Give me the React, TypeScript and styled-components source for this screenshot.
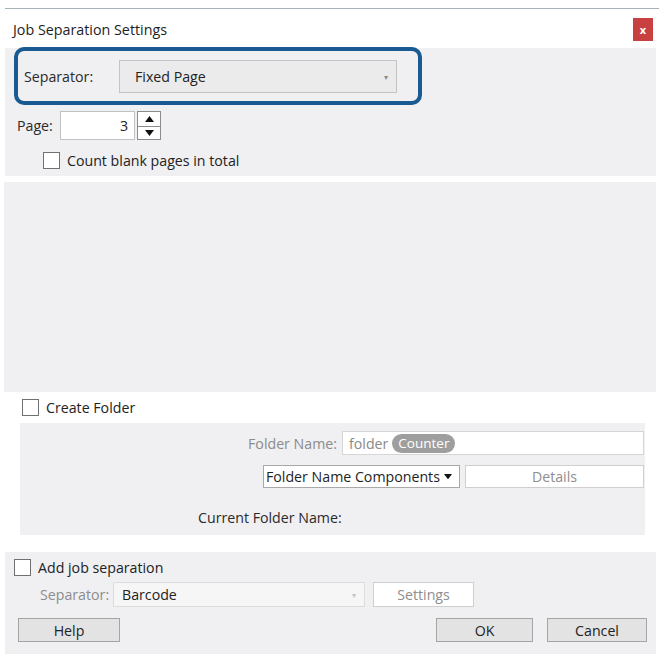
import React from "react";
import styled, { createGlobalStyle } from "styled-components";

const GlobalStyle = createGlobalStyle`
  html, body {
    margin: 0;
    padding: 0;
    background: #ffffff;
  }
  body {
    font-family: "Open Sans", "Noto Sans", "Liberation Sans", sans-serif;
    font-size: 14.2px;
    color: #262626;
  }
`;

const panelBg = "#f0eff2";

const Window = styled.div`
  width: 659px;
  height: 654px;
  display: flex;
  flex-direction: column;
  overflow: hidden;
  background: #ffffff;
`;

const TopRule = styled.div`
  height: 1px;
  margin: 8px 0 0 5px;
  background: #a6b4bb;
`;

const TitleBar = styled.div`
  height: 39px;
  display: flex;
  align-items: center;
  justify-content: space-between;
  padding: 0 6px 0 13px;
`;

const Title = styled.span`
  font-size: 14.3px;
  color: #1e1e1e;
  margin-top: 2px;
`;

const CloseButton = styled.button`
  width: 20px;
  height: 23px;
  margin-top: 2px;
  border: none;
  padding: 0;
  background: #c8403f;
  color: #ffffff;
  font-family: "Open Sans", sans-serif;
  font-size: 11px;
  font-weight: 700;
  line-height: 20px;
`;

const Panel = styled.div<{ $top?: number; $left: number; $right: number; $height: number }>`
  background: ${panelBg};
  margin: ${(p) => p.$top ?? 0}px ${(p) => p.$right}px 0 ${(p) => p.$left}px;
  height: ${(p) => p.$height}px;
  display: flex;
  flex-direction: column;
  box-sizing: border-box;
`;

const Highlight = styled.div`
  margin: -1px 0 0 9px;
  width: 408px;
  height: 58px;
  box-sizing: border-box;
  border: 4.5px solid #1a5a92;
  border-radius: 10px;
  display: flex;
  align-items: center;
  padding-left: 6px;
  background: ${panelBg};
`;

const FieldLabel = styled.span<{ $width: number; $muted?: boolean }>`
  width: ${(p) => p.$width}px;
  flex: none;
  color: ${(p) => (p.$muted ? "#8d8d8d" : "#2a2a2a")};
`;

const Combo = styled.div<{ $width: number; $height: number; $disabled?: boolean }>`
  width: ${(p) => p.$width}px;
  height: ${(p) => p.$height}px;
  box-sizing: border-box;
  border: 1px solid ${(p) => (p.$disabled ? "#dcdcdc" : "#c4c4c4")};
  background: ${(p) => (p.$disabled ? "#f6f6f7" : "#ebebeb")};
  display: flex;
  align-items: center;
  justify-content: space-between;
  padding: 0 8px 0 ${(p) => (p.$disabled ? 8 : 15)}px;
  color: #222;
`;

const ComboArrow = styled.span<{ $light?: boolean }>`
  font-size: 8px;
  color: ${(p) => (p.$light ? "#c4c4c4" : "#8a8a8a")};
`;

const PageRow = styled.div`
  display: flex;
  align-items: center;
  margin-top: 6px;
  padding-left: 12px;
`;

const SpinInput = styled.div`
  width: 75px;
  height: 29px;
  box-sizing: border-box;
  border: 1px solid #c2c2c2;
  background: #ffffff;
  display: flex;
  align-items: center;
  justify-content: flex-end;
  padding-right: 6px;
  color: #222;
`;

const SpinButtons = styled.div`
  width: 24px;
  height: 29px;
  margin-left: 2px;
  box-sizing: border-box;
  border: 1px solid #8c8c8c;
  background: #ffffff;
  display: grid;
  grid-template-rows: 1fr 1fr;
  & > span + span {
    border-top: 1px solid #8c8c8c;
  }
`;

const SpinHalf = styled.span`
  display: flex;
  align-items: center;
  justify-content: center;
`;

const CheckRow = styled.div<{ $indent: number; $top?: number; $height?: number }>`
  display: flex;
  align-items: center;
  padding-left: ${(p) => p.$indent}px;
  margin-top: ${(p) => p.$top ?? 0}px;
  height: ${(p) => (p.$height ? `${p.$height}px` : "auto")};
  color: #222;
`;

const Box = styled.span`
  width: 17px;
  height: 17px;
  box-sizing: border-box;
  border: 1px solid #717171;
  background: #ffffff;
  margin-right: 7px;
  flex: none;
`;

const Row = styled.div<{ $top: number; $indent?: number }>`
  display: flex;
  align-items: center;
  margin-top: ${(p) => p.$top}px;
  padding-left: ${(p) => p.$indent ?? 0}px;
`;

const EndRow = styled(Row)`
  justify-content: flex-end;
  padding-right: 1px;
`;

const MutedLabel = styled.span`
  color: #8b8b8b;
  margin-right: 5px;
`;

const TextField = styled.div`
  width: 302px;
  height: 24px;
  box-sizing: border-box;
  border: 1px solid #d6d6d6;
  background: #ffffff;
  display: flex;
  align-items: center;
  padding-left: 6px;
  color: #8a8a8a;
`;

const Token = styled.span`
  margin-left: 4px;
  height: 19px;
  padding: 0 6px;
  border-radius: 10px;
  background: #9e9e9e;
  color: #ffffff;
  display: flex;
  align-items: center;
  font-size: 13.5px;
`;

const MenuButton = styled.div`
  width: 197px;
  height: 23px;
  box-sizing: border-box;
  border: 1px solid #a9a9a9;
  background: #ffffff;
  display: flex;
  align-items: center;
  padding-left: 2px;
  gap: 4px;
  color: #1e1e1e;
  white-space: nowrap;
`;

const Button = styled.div<{ $width: number; $height: number; $disabled?: boolean }>`
  width: ${(p) => p.$width}px;
  height: ${(p) => p.$height}px;
  box-sizing: border-box;
  border: 1px solid ${(p) => (p.$disabled ? "#cfcfcf" : "#a5a5a5")};
  background: ${(p) => (p.$disabled ? "#ffffff" : "#e3e3e4")};
  color: ${(p) => (p.$disabled ? "#8e8e8e" : "#222")};
  display: flex;
  align-items: center;
  justify-content: center;
  flex: none;
`;

const Spacer = styled.div`
  flex: 1;
`;

const Triangle = ({ up, size = 9 }: { up?: boolean; size?: number }) => (
  <svg width={size} height={size * 0.67} viewBox="0 0 9 6">
    <path d={up ? "M4.5 0 L9 6 L0 6 Z" : "M0 0 L9 0 L4.5 6 Z"} fill="#111" />
  </svg>
);

export default function App() {
  return (
    <>
      <GlobalStyle />
      <Window>
        <TopRule />
        <TitleBar>
          <Title>Job Separation Settings</Title>
          <CloseButton>x</CloseButton>
        </TitleBar>

        <Panel $left={5} $right={3} $height={128}>
          <Highlight>
            <FieldLabel $width={95}>Separator:</FieldLabel>
            <Combo $width={278} $height={33}>
              <span>Fixed Page</span>
              <ComboArrow>▾</ComboArrow>
            </Combo>
          </Highlight>
          <PageRow>
            <FieldLabel $width={43}>Page:</FieldLabel>
            <SpinInput>3</SpinInput>
            <SpinButtons>
              <SpinHalf>
                <Triangle up />
              </SpinHalf>
              <SpinHalf>
                <Triangle />
              </SpinHalf>
            </SpinButtons>
          </PageRow>
          <CheckRow $indent={38} $top={11}>
            <Box />
            Count blank pages in total
          </CheckRow>
        </Panel>

        <Panel $top={6} $left={4} $right={3} $height={210} />

        <CheckRow $indent={22} $height={31}>
          <Box />
          Create Folder
        </CheckRow>

        <Panel $left={20} $right={14} $height={112}>
          <EndRow $top={8}>
            <MutedLabel>Folder Name:</MutedLabel>
            <TextField>
              folder
              <Token>Counter</Token>
            </TextField>
          </EndRow>
          <EndRow $top={10}>
            <MenuButton>
              Folder Name Components
              <Triangle size={8} />
            </MenuButton>
            <Button $width={179} $height={23} $disabled style={{ marginLeft: 5 }}>
              Details
            </Button>
          </EndRow>
          <Row $top={20} $indent={178}>
            <span style={{ color: "#2a2a2a" }}>Current Folder Name:</span>
          </Row>
        </Panel>

        <Panel $top={17} $left={5} $right={3} $height={102}>
          <CheckRow $indent={9} $top={6}>
            <Box />
            Add job separation
          </CheckRow>
          <Row $top={5} $indent={35}>
            <FieldLabel $width={73} $muted>
              Separator:
            </FieldLabel>
            <Combo $width={252} $height={25} $disabled>
              <span>Barcode</span>
              <ComboArrow $light>▾</ComboArrow>
            </Combo>
            <Button $width={101} $height={25} $disabled style={{ marginLeft: 8 }}>
              Settings
            </Button>
          </Row>
          <Row $top={11} $indent={13}>
            <Button $width={102} $height={24}>
              Help
            </Button>
            <Spacer />
            <Button $width={97} $height={24}>
              OK
            </Button>
            <Button $width={100} $height={24} style={{ marginLeft: 14, marginRight: 9 }}>
              Cancel
            </Button>
          </Row>
        </Panel>
      </Window>
    </>
  );
}
